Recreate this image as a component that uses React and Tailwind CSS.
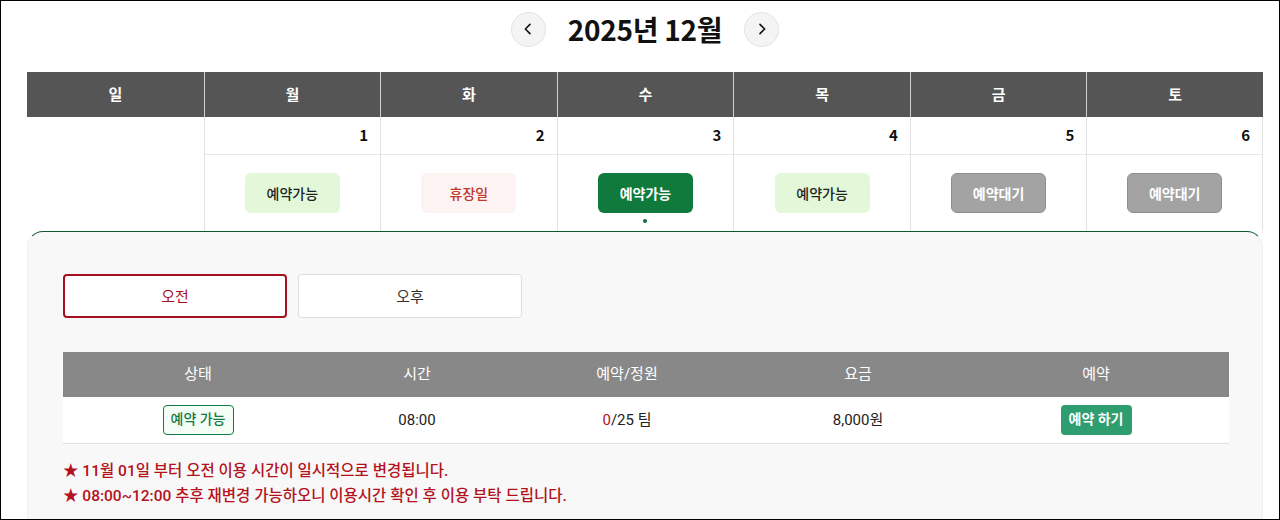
import React, { useState } from 'react';

const FONT = { fontFamily: '"Noto Sans CJK KR", "Noto Sans", sans-serif' };
const BODY_FONT = { fontFamily: 'Roboto, "Noto Sans CJK KR", sans-serif' };

const days = ['일', '월', '화', '수', '목', '금', '토'];

const cells = [
  null,
  { date: 1, label: '예약가능', kind: 'open' },
  { date: 2, label: '휴장일', kind: 'closed' },
  { date: 3, label: '예약가능', kind: 'selected' },
  { date: 4, label: '예약가능', kind: 'open' },
  { date: 5, label: '예약대기', kind: 'wait' },
  { date: 6, label: '예약대기', kind: 'wait' },
];

const btnClass = {
  open: 'bg-[#e2f8d9] text-[#222] font-medium',
  closed: 'bg-[#fdf3f3] text-[#c0392b] font-medium',
  selected: 'bg-[#0f7a3b] text-white font-bold',
  wait: 'bg-[#a3a3a3] text-white font-bold border border-[#8f8f8f]',
};

function Chevron({ dir }) {
  return (
    <svg width="16" height="16" viewBox="0 0 24 24" fill="none" stroke="#111" strokeWidth="2.4" strokeLinecap="round" strokeLinejoin="round">
      {dir === 'left' ? <path d="M15 5l-7 7 7 7" /> : <path d="M9 5l7 7-7 7" />}
    </svg>
  );
}

export default function App() {
  const [tab, setTab] = useState('am');

  return (
    <div style={FONT} className="w-[1280px] h-[520px] overflow-hidden bg-white border border-black">
      <div className="w-[1236px] ml-[26px] flex items-center justify-center gap-[22px] h-[56px]">
        <button className="w-[35px] h-[35px] rounded-full bg-[#f4f4f5] border border-[#e3e3e3] flex items-center justify-center">
          <Chevron dir="left" />
        </button>
        <h1 className="text-[28px] leading-[34px] font-bold text-[#111] tracking-[-0.3px]">2025년 12월</h1>
        <button className="w-[35px] h-[35px] rounded-full bg-[#f4f4f5] border border-[#e3e3e3] flex items-center justify-center">
          <Chevron dir="right" />
        </button>
      </div>

      <div className="w-[1236px] ml-[26px] mt-[15px]">
        <div className="grid grid-cols-7 bg-[#555555] h-[45px]">
          {days.map((d, i) => (
            <div key={d} className={`flex items-center justify-center text-white font-bold text-[15px] ${i > 0 ? 'border-l border-[#d0d0d0]' : ''}`}>
              {d}
            </div>
          ))}
        </div>
        <div className="grid grid-cols-7">
          {cells.map((c, i) =>
            c ? (
              <div key={i} className="border-l border-[#e2e2e2] last:border-r">
                <div className="h-[38px] border-b border-[#e8e8e8] flex items-center justify-end pr-[12px] text-[15px] font-bold text-[#111]">
                  {c.date}
                </div>
                <div className="h-[76px] flex flex-col items-center pt-[18px]">
                  <div className={`w-[95px] h-[40px] rounded-[6px] flex items-center justify-center text-[14px] ${btnClass[c.kind]}`}>
                    {c.label}
                  </div>
                  {c.kind === 'selected' && <div className="w-[4px] h-[4px] rounded-full bg-[#0f6b35] mt-[6px]" />}
                </div>
              </div>
            ) : (
              <div key={i} />
            )
          )}
        </div>

        <div className="bg-[#f8f8f8] border-t border-x border-t-[#0f5a2c] border-x-[#f1f1f1] rounded-t-[16px] h-[300px] px-[35px] pt-[42px]">
          <div className="flex gap-[11px]">
            <button
              onClick={() => setTab('am')}
              className={`w-[224px] h-[44px] rounded-[4px] bg-white text-[15px] ${tab === 'am' ? 'border-2 border-[#a3101f] text-[#a3101f]' : 'border border-[#dedede] text-[#333]'}`}
            >
              오전
            </button>
            <button
              onClick={() => setTab('pm')}
              className={`w-[224px] h-[44px] rounded-[4px] bg-white text-[15px] ${tab === 'pm' ? 'border-2 border-[#a3101f] text-[#a3101f]' : 'border border-[#dedede] text-[#333]'}`}
            >
              오후
            </button>
          </div>

          <table style={BODY_FONT} className="w-[1166px] mt-[34px] text-[15px] border-collapse">
            <thead>
              <tr className="bg-[#888888] text-white h-[45px]">
                <th className="w-[270px] font-normal">상태</th>
                <th className="w-[168px] font-normal">시간</th>
                <th className="w-[252px] font-normal">예약/정원</th>
                <th className="w-[210px] font-normal">요금</th>
                <th className="font-normal">예약</th>
              </tr>
            </thead>
            <tbody>
              <tr className="bg-white h-[46px] border-b border-[#e0e0e0] text-[#222] text-center">
                <td>
                  <span className="inline-flex items-center justify-center h-[30px] px-[7px] rounded-[4px] border border-[#167a45] bg-[#f3fdf6] text-[#167a45] text-[14px] font-medium">
                    예약 가능
                  </span>
                </td>
                <td>08:00</td>
                <td>
                  <span className="text-[#b3121d]">0</span>/25 팀
                </td>
                <td>8,000원</td>
                <td>
                  <span className="inline-flex items-center justify-center h-[30px] px-[8px] rounded-[4px] bg-[#2e9d6f] text-white text-[14px] font-bold">
                    예약 하기
                  </span>
                </td>
              </tr>
            </tbody>
          </table>

          <div style={BODY_FONT} className="mt-[15px] text-[15.5px] font-medium text-[#b3121d] leading-[25px]">
            <p>★ 11월 01일 부터 오전 이용 시간이 일시적으로 변경됩니다.</p>
            <p>★ 08:00~12:00 추후 재변경 가능하오니 이용시간 확인 후 이용 부탁 드립니다.</p>
          </div>
        </div>
      </div>
    </div>
  );
}
